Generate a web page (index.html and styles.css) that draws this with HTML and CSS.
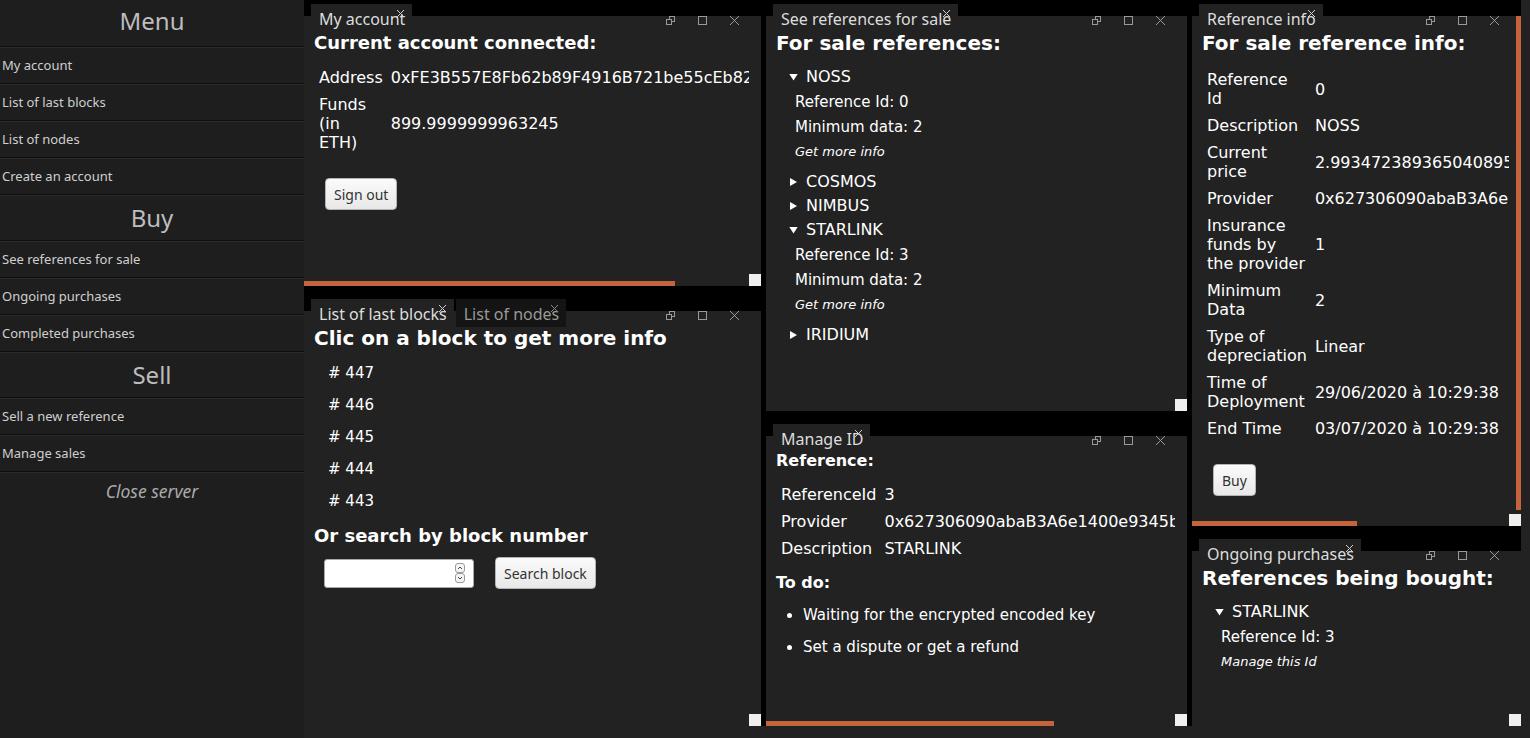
FILE: index.html
```html
<!DOCTYPE html>
<html lang="en">
<head>
<meta charset="utf-8">
<title>Dashboard</title>
<link rel="stylesheet" href="styles.css">
</head>
<body>
<div class="app">
  <nav class="sidebar">
    <div class="side-title">Menu</div>
    <div class="side-item">My account</div>
    <div class="side-item">List of last blocks</div>
    <div class="side-item">List of nodes</div>
    <div class="side-item">Create an account</div>
    <div class="side-section">Buy</div>
    <div class="side-item">See references for sale</div>
    <div class="side-item">Ongoing purchases</div>
    <div class="side-item">Completed purchases</div>
    <div class="side-section">Sell</div>
    <div class="side-item">Sell a new reference</div>
    <div class="side-item">Manage sales</div>
    <div class="side-close">Close server</div>
  </nav>

  <main class="layout">
    <div class="col col1">
      <section class="panel p-account">
        <header class="lm-header">
          <div class="tab">My account<svg class="tab-x" viewBox="0 0 7 7"><path d="M0 0L7 7M7 0L0 7"/></svg></div>
          <div class="controls">
            <svg viewBox="0 0 9 9"><rect class="back" x="3.5" y="0.5" width="5" height="5"/><rect class="front" x="0.5" y="3.5" width="5" height="5"/></svg>
            <svg viewBox="0 0 9 9"><rect class="back" x="0.5" y="0.5" width="8" height="8"/></svg>
            <svg viewBox="0 0 9 9"><path d="M0 0L9 9M9 0L0 9"/></svg>
          </div>
        </header>
        <div class="lm-body">
          <div class="view">
            <h3 class="h-account">Current account connected:</h3>
            <table class="info">
              <tr><td>Address</td><td>0xFE3B557E8Fb62b89F4916B721be55cEb828dBd73</td></tr>
              <tr><td>Funds (in ETH)</td><td>899.9999999963245</td></tr>
            </table>
            <div class="actions"><button class="btn">Sign out</button></div>
          </div>
          <div class="vtrack"></div>
          <div class="htrack"><div class="hthumb" style="width:371px"></div></div>
          <div class="corner"></div>
        </div>
      </section>

      <section class="panel p-blocks">
        <header class="lm-header">
          <div class="tab">List of last blocks<svg class="tab-x" viewBox="0 0 7 7"><path d="M0 0L7 7M7 0L0 7"/></svg></div>
          <div class="tab inactive">List of nodes<svg class="tab-x" viewBox="0 0 7 7"><path d="M0 0L7 7M7 0L0 7"/></svg></div>
          <div class="controls">
            <svg viewBox="0 0 9 9"><rect class="back" x="3.5" y="0.5" width="5" height="5"/><rect class="front" x="0.5" y="3.5" width="5" height="5"/></svg>
            <svg viewBox="0 0 9 9"><rect class="back" x="0.5" y="0.5" width="8" height="8"/></svg>
            <svg viewBox="0 0 9 9"><path d="M0 0L9 9M9 0L0 9"/></svg>
          </div>
        </header>
        <div class="lm-body">
          <div class="view">
            <h3 class="h-lg">Clic on a block to get more info</h3>
            <div class="blocks">
              <div class="block"># 447</div>
              <div class="block"># 446</div>
              <div class="block"># 445</div>
              <div class="block"># 444</div>
              <div class="block"># 443</div>
            </div>
            <h3 class="h-search">Or search by block number</h3>
            <div class="search-row">
              <span class="numbox">
                <input class="num" type="text" aria-label="Block number">
                <span class="spin">
                  <span class="spin-btn"><svg viewBox="0 0 8 8"><path d="M2 5L4 3L6 5"/></svg></span>
                  <span class="spin-btn"><svg viewBox="0 0 8 8"><path d="M2 3L4 5L6 3"/></svg></span>
                </span>
              </span>
              <button class="btn">Search block</button>
            </div>
          </div>
          <div class="vtrack"></div>
          <div class="htrack"></div>
          <div class="corner"></div>
        </div>
      </section>
    </div>

    <div class="col col2">
      <section class="panel p-refs">
        <header class="lm-header">
          <div class="tab">See references for sale<svg class="tab-x" viewBox="0 0 7 7"><path d="M0 0L7 7M7 0L0 7"/></svg></div>
          <div class="controls">
            <svg viewBox="0 0 9 9"><rect class="back" x="3.5" y="0.5" width="5" height="5"/><rect class="front" x="0.5" y="3.5" width="5" height="5"/></svg>
            <svg viewBox="0 0 9 9"><rect class="back" x="0.5" y="0.5" width="8" height="8"/></svg>
            <svg viewBox="0 0 9 9"><path d="M0 0L9 9M9 0L0 9"/></svg>
          </div>
        </header>
        <div class="lm-body">
          <div class="view">
            <h3 class="h-lg">For sale references:</h3>
            <div class="tree">
              <details open><summary>NOSS</summary>
                <div class="leaf">Reference Id: 0</div>
                <div class="leaf">Minimum data: 2</div>
                <div class="leaf more">Get more info</div>
              </details>
              <details><summary>COSMOS</summary></details>
              <details><summary>NIMBUS</summary></details>
              <details open><summary>STARLINK</summary>
                <div class="leaf">Reference Id: 3</div>
                <div class="leaf">Minimum data: 2</div>
                <div class="leaf more">Get more info</div>
              </details>
              <details><summary>IRIDIUM</summary></details>
            </div>
          </div>
          <div class="vtrack"></div>
          <div class="htrack"></div>
          <div class="corner"></div>
        </div>
      </section>

      <section class="panel p-manage">
        <header class="lm-header">
          <div class="tab">Manage ID<svg class="tab-x" viewBox="0 0 7 7"><path d="M0 0L7 7M7 0L0 7"/></svg></div>
          <div class="controls">
            <svg viewBox="0 0 9 9"><rect class="back" x="3.5" y="0.5" width="5" height="5"/><rect class="front" x="0.5" y="3.5" width="5" height="5"/></svg>
            <svg viewBox="0 0 9 9"><rect class="back" x="0.5" y="0.5" width="8" height="8"/></svg>
            <svg viewBox="0 0 9 9"><path d="M0 0L9 9M9 0L0 9"/></svg>
          </div>
        </header>
        <div class="lm-body">
          <div class="view">
            <h4 class="h-ref">Reference:</h4>
            <table class="info">
              <tr><td>ReferenceId</td><td>3</td></tr>
              <tr><td>Provider</td><td>0x627306090abaB3A6e1400e9345bC60c78a8BEf57</td></tr>
              <tr><td>Description</td><td>STARLINK</td></tr>
            </table>
            <h4 class="todo">To do:</h4>
            <ul class="todo-list">
              <li>Waiting for the encrypted encoded key</li>
              <li>Set a dispute or get a refund</li>
            </ul>
          </div>
          <div class="vtrack"></div>
          <div class="htrack"><div class="hthumb" style="width:288px"></div></div>
          <div class="corner"></div>
        </div>
      </section>
    </div>

    <div class="col col3">
      <section class="panel p-info">
        <header class="lm-header">
          <div class="tab">Reference info<svg class="tab-x" viewBox="0 0 7 7"><path d="M0 0L7 7M7 0L0 7"/></svg></div>
          <div class="controls">
            <svg viewBox="0 0 9 9"><rect class="back" x="3.5" y="0.5" width="5" height="5"/><rect class="front" x="0.5" y="3.5" width="5" height="5"/></svg>
            <svg viewBox="0 0 9 9"><rect class="back" x="0.5" y="0.5" width="8" height="8"/></svg>
            <svg viewBox="0 0 9 9"><path d="M0 0L9 9M9 0L0 9"/></svg>
          </div>
        </header>
        <div class="lm-body">
          <div class="view">
            <h3 class="h-lg">For sale reference info:</h3>
            <table class="info">
              <tr><td>Reference Id</td><td>0</td></tr>
              <tr><td>Description</td><td>NOSS</td></tr>
              <tr><td>Current price</td><td>2.9934723893650408950</td></tr>
              <tr><td>Provider</td><td>0x627306090abaB3A6e1400e9345bC60c78a8BEf57</td></tr>
              <tr><td>Insurance funds by the provider</td><td>1</td></tr>
              <tr><td>Minimum Data</td><td>2</td></tr>
              <tr><td>Type of depreciation</td><td>Linear</td></tr>
              <tr><td>Time of Deployment</td><td>29/06/2020 à 10:29:38</td></tr>
              <tr><td>End Time</td><td>03/07/2020 à 10:29:38</td></tr>
            </table>
            <div class="actions"><button class="btn">Buy</button></div>
          </div>
          <div class="vtrack"><div class="vthumb" style="height:494px"></div></div>
          <div class="htrack"><div class="hthumb" style="width:165px"></div></div>
          <div class="corner"></div>
        </div>
      </section>

      <section class="panel p-ongoing">
        <header class="lm-header">
          <div class="tab">Ongoing purchases<svg class="tab-x" viewBox="0 0 7 7"><path d="M0 0L7 7M7 0L0 7"/></svg></div>
          <div class="controls">
            <svg viewBox="0 0 9 9"><rect class="back" x="3.5" y="0.5" width="5" height="5"/><rect class="front" x="0.5" y="3.5" width="5" height="5"/></svg>
            <svg viewBox="0 0 9 9"><rect class="back" x="0.5" y="0.5" width="8" height="8"/></svg>
            <svg viewBox="0 0 9 9"><path d="M0 0L9 9M9 0L0 9"/></svg>
          </div>
        </header>
        <div class="lm-body">
          <div class="view">
            <h3 class="h-lg">References being bought:</h3>
            <div class="tree">
              <details open><summary>STARLINK</summary>
                <div class="leaf">Reference Id: 3</div>
                <div class="leaf more">Manage this Id</div>
              </details>
            </div>
          </div>
          <div class="vtrack"></div>
          <div class="htrack"></div>
          <div class="corner"></div>
        </div>
      </section>
    </div>
  </main>
</div>
</body>
</html>
```

FILE: styles.css
```css
html, body {
  margin: 0;
  padding: 0;
}

body {
  background: #222;
  overflow: hidden;
  font-family: "DejaVu Sans", sans-serif;
  color: #fff;
}

.app {
  display: flex;
  width: 1530px;
  height: 738px;
}

/* ---------- Sidebar ---------- */
.sidebar {
  width: 304px;
  flex: none;
  background: #1e1e1e;
  font-family: "Noto Sans", "Open Sans", sans-serif;
  color: #cfcfcf;
}

.side-title {
  height: 46px;
  border-bottom: 1px solid #0e0e0e;
  font-size: 24px;
  line-height: 42px;
  text-align: center;
  color: #bdbdbd;
}

.side-section {
  height: 44px;
  border-top: 1px solid #2b2b2b;
  border-bottom: 1px solid #0e0e0e;
  font-size: 24px;
  line-height: 44px;
  text-align: center;
  color: #bdbdbd;
}

.side-item {
  height: 35px;
  line-height: 35px;
  border-top: 1px solid #2b2b2b;
  border-bottom: 1px solid #0e0e0e;
  padding-left: 2px;
  font-size: 13px;
}

.side-close {
  border-top: 1px solid #2b2b2b;
  height: 36px;
  line-height: 36px;
  text-align: center;
  font-style: italic;
  font-size: 17.5px;
  color: #aaa;
}

/* ---------- Dock layout ---------- */
.layout {
  flex: none;
  width: 1217px;
  height: 730px;
  margin-top: -4px;
  display: flex;
  gap: 5px;
  background: #000;
}

.col {
  display: flex;
  flex-direction: column;
  gap: 5px;
  min-height: 0;
}

.col1 { width: 457px; }
.col2 { width: 421px; }
.col3 { width: 329px; }

.panel {
  position: relative;
  display: flex;
  flex-direction: column;
  min-height: 0;
}

.p-account { height: 290px; }
.p-refs { height: 415px; }
.p-info { height: 530px; }
.p-blocks, .p-manage, .p-ongoing { flex: 1; }

.lm-header {
  position: relative;
  height: 20px;
  flex: none;
  display: flex;
  align-items: flex-start;
  gap: 2px;
  padding-left: 7px;
}

.tab {
  position: relative;
  z-index: 2;
  margin-top: 8px;
  height: 28px;
  box-sizing: border-box;
  padding: 4px 7px 0 8px;
  font-family: "Noto Sans", "Open Sans", sans-serif;
  font-size: 16px;
  line-height: 22px;
  color: #ddd;
  background: #222;
  white-space: nowrap;
}

.tab.inactive {
  background: #141414;
  color: #999;
}

.tab-x {
  position: absolute;
  top: 6px;
  right: 8px;
  width: 7px;
  height: 7px;
  fill: none;
  stroke: #d0d0d0;
  stroke-width: 1;
}

.tab.inactive .tab-x {
  stroke: #888;
}

.controls {
  position: absolute;
  z-index: 2;
  top: 20px;
  right: 22px;
  display: flex;
  gap: 23px;
}

.controls svg {
  width: 9px;
  height: 9px;
  stroke: #999;
  stroke-width: 1;
  fill: none;
}

.controls .front {
  fill: #222;
}

.lm-body {
  flex: 1;
  min-height: 0;
  display: grid;
  grid-template-columns: minmax(0, 1fr) 12px;
  grid-template-rows: minmax(0, 1fr) 12px;
  background: #222;
}

.view {
  overflow: hidden;
  min-width: 0;
  min-height: 0;
  padding: 0 10px;
}

.vthumb {
  margin-left: 7px;
  width: 5px;
  background: #c5633c;
}

.hthumb {
  margin-top: 7px;
  height: 5px;
  background: #c5633c;
}

.corner {
  background: #f0efed;
}

/* ---------- Content ---------- */
h3 {
  margin: 16px 0 10px;
  font-size: 18px;
  line-height: 22px;
  font-weight: bold;
  white-space: nowrap;
}

h3.h-lg {
  font-size: 20px;
  margin-bottom: 11px;
}

h3.h-account {
  margin: 15.5px 0 9.5px;
}

h4 {
  margin: 14px 0 10px;
  font-size: 16px;
  line-height: 20px;
  font-weight: bold;
}

h4.h-ref {
  margin-top: 15px;
  margin-bottom: 9px;
}

h4.todo {
  margin-top: 10px;
}

table.info {
  border-spacing: 2px;
  font-size: 16px;
  color: #fff;
}

table.info td {
  padding: 3px;
  vertical-align: middle;
}

table.info td + td {
  white-space: nowrap;
}

.actions {
  margin-top: 21px;
  padding-left: 11px;
}

.btn {
  height: 32px;
  padding: 0 8px;
  border: 1px solid #b4b4b4;
  border-radius: 4px;
  background: linear-gradient(#fbfbfb, #e8e8e8);
  color: #333;
  font-family: "Noto Sans", "Open Sans", sans-serif;
  font-size: 14px;
}

.blocks {
  display: flex;
  flex-direction: column;
  gap: 6px;
  padding-left: 14px;
}

.block {
  font-size: 15px;
  line-height: 26px;
}

h3.h-search {
  margin-top: 11px;
}

.search-row {
  display: flex;
  align-items: center;
  gap: 21px;
  margin-top: 10px;
  padding-left: 10px;
}

.numbox {
  display: inline-flex;
  align-items: center;
  width: 150px;
  height: 29px;
  box-sizing: border-box;
  border: 1px solid #a9a9a9;
  border-radius: 3px;
  background: #fff;
}

.num {
  flex: 1;
  min-width: 0;
  border: 0;
  outline: none;
  background: transparent;
  font-size: 14px;
}

.spin {
  display: flex;
  flex-direction: column;
  margin-right: 8px;
}

.spin-btn {
  display: flex;
  width: 10px;
  height: 10px;
  box-sizing: border-box;
  border: 1px solid #9a9a9a;
  border-radius: 3px;
  background: #f4f4f4;
}

.spin-btn svg {
  width: 8px;
  height: 8px;
  fill: none;
  stroke: #444;
  stroke-width: 1;
}

.tree {
  padding-left: 13px;
}

.tree details[open] {
  margin-bottom: 7px;
}

.tree summary {
  display: flex;
  align-items: center;
  list-style: none;
  font-size: 16px;
  line-height: 24px;
}

.tree details[open] > summary {
  margin-bottom: 1px;
}

.tree summary::-webkit-details-marker {
  display: none;
}

.tree summary::before {
  content: "";
  width: 7px;
  height: 8px;
  margin: 0 9px 0 1px;
  background: #fff;
  clip-path: polygon(0 0, 100% 50%, 0 100%);
}

.tree details[open] > summary::before {
  width: 9px;
  height: 7px;
  margin: 0 8px 0 0;
  clip-path: polygon(0 0, 100% 0, 50% 100%);
}

.leaf {
  padding-left: 6px;
  font-size: 15px;
  line-height: 25px;
}

.leaf.more {
  font-size: 13px;
  font-style: italic;
  line-height: 23px;
}

.todo-list {
  margin: 0;
  padding-left: 27px;
  font-size: 15px;
  line-height: 24px;
}

.todo-list li {
  margin-bottom: 8px;
}
```
